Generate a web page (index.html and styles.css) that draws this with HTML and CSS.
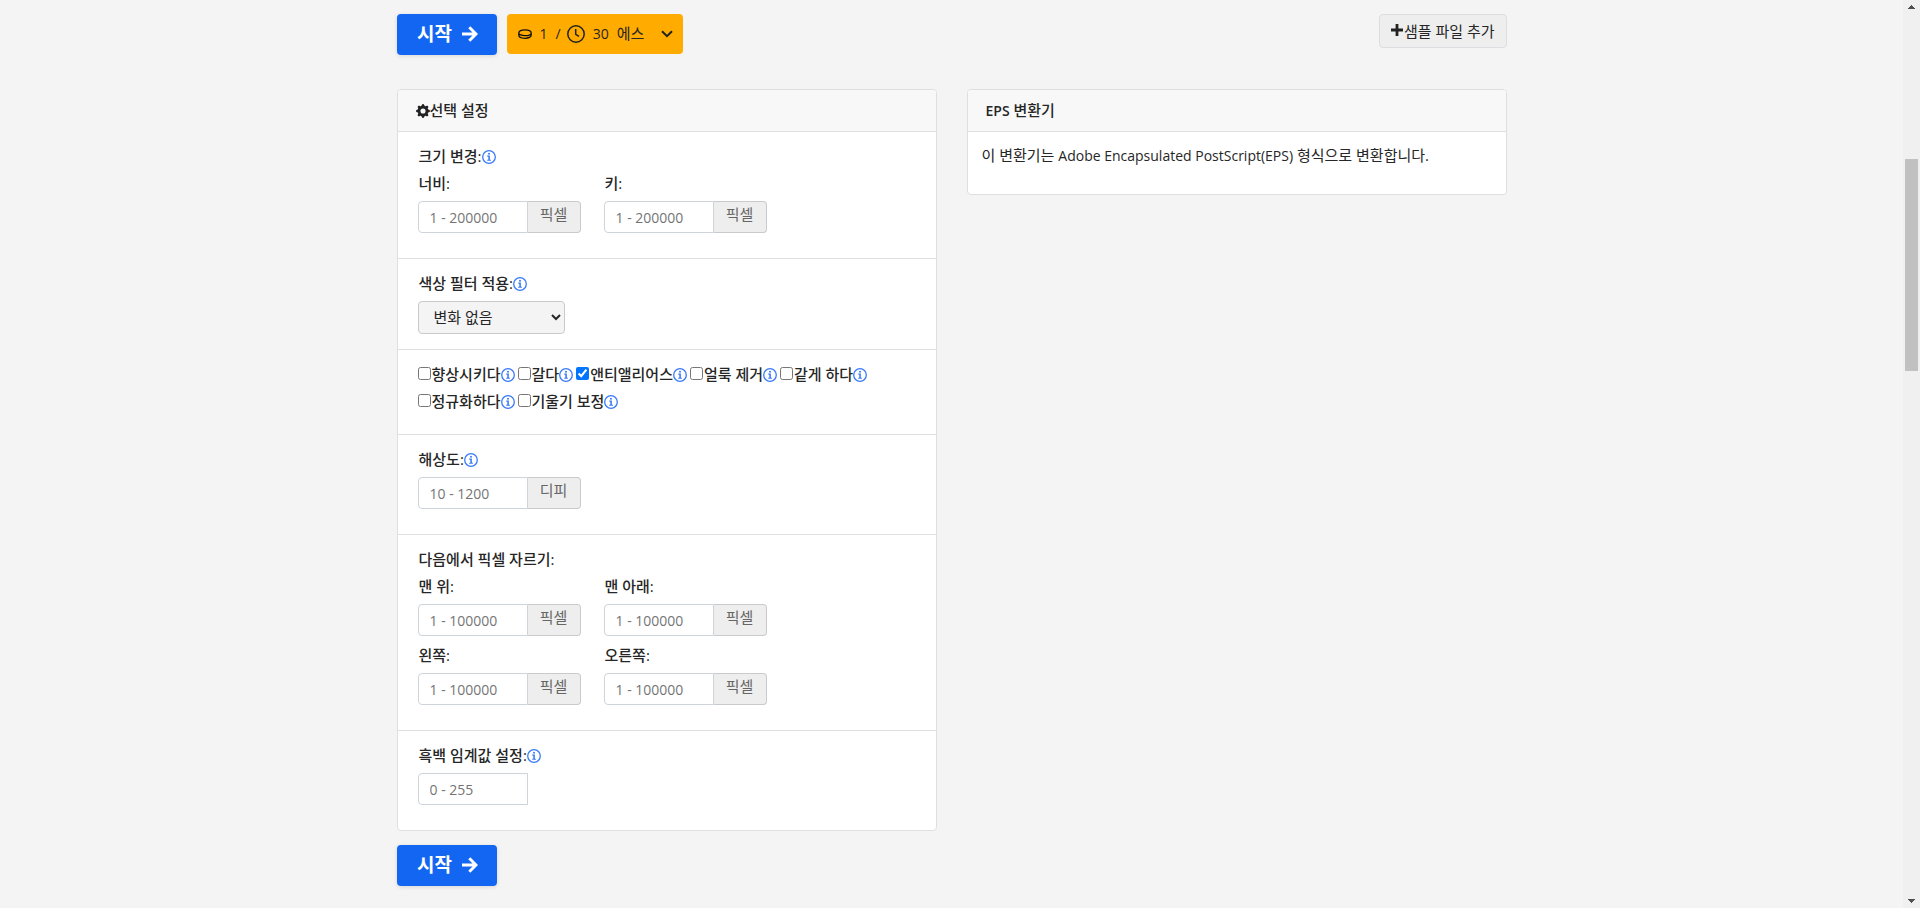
FILE: index.html
```
<!DOCTYPE html>
<html lang="ko">
<head>
<meta charset="utf-8">
<meta name="viewport" content="width=device-width, initial-scale=1">
<title>EPS 변환기</title>
<link rel="stylesheet" href="styles.css">
</head>
<body>
<svg class="sprite" aria-hidden="true">
  <symbol id="info" viewBox="0 0 16 16"><circle cx="8" cy="8" r="7.200" fill="none" stroke="currentColor" stroke-width="1.500"/><path d="M6 6.300h3v4.700h1.200v1.300H5.900V11h1.300V7.600H6z"/><circle cx="8" cy="4.400" r="1.150"/></symbol>
  <symbol id="arrow" viewBox="0 0 17 16"><path d="M1 8h14M8.3 1.2 15 8l-6.700 6.800" fill="none" stroke="currentColor" stroke-width="2.900"/></symbol>
</svg>
<main class="page">
  <div class="container">
    <div class="toolbar">
      <button class="start" type="button">시작 <svg><use href="#arrow"/></svg></button>
      <button class="cost" type="button">
        <svg class="coin" viewBox="0 0 14 10"><path d="M.8 3.900C.8 2 3.400.8 7 .8s6.200 1.200 6.200 3.100S10.600 6.600 7 6.600.8 5.800.8 3.900zm0 0v2.200C.8 8 3.400 9.300 7 9.300S13.200 8 13.200 6.100V3.900" fill="none" stroke="#111" stroke-width="1.300"/></svg>
        <span class="num">1</span><span class="num">/</span>
        <svg class="clock" viewBox="0 0 18 18"><circle cx="9" cy="9" r="8.200"/><path d="M8.700 4v5.300l3.300 2"/></svg>
        <span class="num">30</span><span>에스</span>
        <svg class="chevron" viewBox="0 0 12 8"><path d="m1 1.200 5 5 5-5"/></svg>
      </button>
      <button class="sample" type="button"><svg viewBox="0 0 12 12"><path d="M6 0v12M0 6h12"/></svg>샘플 파일 추가</button>
    </div>

    <div class="columns">
      <form class="card">
        <h2 class="card-head"><svg class="gear" viewBox="0 0 16 16"><path d="M9.405 1.050c-.413-1.400-2.397-1.400-2.810 0l-.1.340a1.464 1.464 0 0 1-2.105.872l-.310-.170c-1.283-.698-2.686.705-1.987 1.987l.169.311c.446.820.023 1.841-.872 2.105l-.340.100c-1.400.413-1.400 2.397 0 2.810l.340.100a1.464 1.464 0 0 1 .872 2.105l-.170.310c-.698 1.283.705 2.686 1.987 1.987l.311-.169a1.464 1.464 0 0 1 2.105.872l.100.340c.413 1.400 2.397 1.400 2.810 0l.100-.340a1.464 1.464 0 0 1 2.105-.872l.310.170c1.283.698 2.686-.705 1.987-1.987l-.169-.311a1.464 1.464 0 0 1 .872-2.105l.340-.100c1.400-.413 1.400-2.397 0-2.810l-.340-.100a1.464 1.464 0 0 1-.872-2.105l.170-.310c.698-1.283-.705-2.686-1.987-1.987l-.311.169a1.464 1.464 0 0 1-2.105-.872l-.100-.340zM8 10.930a2.929 2.929 0 1 1 0-5.860 2.929 2.929 0 0 1 0 5.860z"/></svg>선택 설정</h2>

        <section class="group">
          <div class="title">크기 변경:<svg class="info"><use href="#info"/></svg></div>
          <div class="fields">
            <div><label for="width">너비:</label><div class="unit"><input id="width" type="text" placeholder="1 - 200000"><span>픽셀</span></div></div>
            <div><label for="height">키:</label><div class="unit"><input id="height" type="text" placeholder="1 - 200000"><span>픽셀</span></div></div>
          </div>
        </section>

        <section class="group group-filter">
          <label for="filter">색상 필터 적용:<svg class="info"><use href="#info"/></svg></label>
          <select id="filter"><option>변화 없음</option></select>
        </section>

        <section class="group group-checks">
          <label><input type="checkbox">향상시키다<svg class="info"><use href="#info"/></svg></label>
          <label><input type="checkbox">갈다<svg class="info"><use href="#info"/></svg></label>
          <label><input type="checkbox" checked>앤티앨리어스<svg class="info"><use href="#info"/></svg></label>
          <label><input type="checkbox">얼룩 제거<svg class="info"><use href="#info"/></svg></label>
          <label><input type="checkbox">같게 하다<svg class="info"><use href="#info"/></svg></label>
          <label><input type="checkbox">정규화하다<svg class="info"><use href="#info"/></svg></label>
          <label><input type="checkbox">기울기 보정<svg class="info"><use href="#info"/></svg></label>
        </section>

        <section class="group">
          <label for="dpi">해상도:<svg class="info"><use href="#info"/></svg></label>
          <div class="unit"><input id="dpi" type="text" placeholder="10 - 1200"><span>디피</span></div>
        </section>

        <section class="group">
          <div class="title">다음에서 픽셀 자르기:</div>
          <div class="fields">
            <div><label for="top">맨 위:</label><div class="unit"><input id="top" type="text" placeholder="1 - 100000"><span>픽셀</span></div></div>
            <div><label for="bottom">맨 아래:</label><div class="unit"><input id="bottom" type="text" placeholder="1 - 100000"><span>픽셀</span></div></div>
            <div><label for="left">왼쪽:</label><div class="unit"><input id="left" type="text" placeholder="1 - 100000"><span>픽셀</span></div></div>
            <div><label for="right">오른쪽:</label><div class="unit"><input id="right" type="text" placeholder="1 - 100000"><span>픽셀</span></div></div>
          </div>
        </section>

        <section class="group">
          <label for="threshold">흑백 임계값 설정:<svg class="info"><use href="#info"/></svg></label>
          <div class="unit"><input id="threshold" type="text" placeholder="0 - 255"></div>
        </section>
      </form>

      <article class="card">
        <h2 class="card-head"><span class="latin">EPS</span>&nbsp;변환기</h2>
        <p class="about">이 변환기는 <span class="latin">Adobe Encapsulated PostScript(EPS)</span> 형식으로 변환합니다.</p>
      </article>
    </div>

    <button class="start" type="button">시작 <svg><use href="#arrow"/></svg></button>
  </div>
</main>
<div class="scrollbar" aria-hidden="true">
  <svg viewBox="0 0 7 4"><path d="M3 0h1v1h1v1h1v1h1v1H0V3h1V2h1V1h1z"/></svg>
  <div class="track"><div class="thumb"></div></div>
  <svg viewBox="0 0 7 4"><path d="M0 0h7v1H6v1H5v1H4v1H3V3H2V2H1V1H0z"/></svg>
</div>
</body>
</html>
```
FILE: styles.css
```
* { box-sizing: border-box; }

body {
  margin: 0;
  display: flex;
  min-height: 100vh;
  background: #f4f4f4;
  color: #262626;
  font: 15px/27px "Open Sans", "Noto Sans CJK KR", sans-serif;
}

button, input, select { font: inherit; color: inherit; margin: 0; }
button { cursor: pointer; }
.sprite { display: none; }
.latin, .num { font-size: 14px; }

.page { flex: 1; }
.container { max-width: 1140px; margin: 0 auto; padding: 14px 15px 20px; }

.toolbar { display: flex; align-items: flex-start; gap: 10px; margin-bottom: 34px; }

.start {
  display: flex;
  align-items: center;
  justify-content: center;
  gap: 9px;
  width: 100px;
  height: 41px;
  padding: 0 0 1px 2px;
  border: 0;
  border-radius: 4px;
  background: #1266f1;
  color: #fff;
  font-size: 19px;
  font-weight: 700;
  box-shadow: 0 1px 4px rgba(0, 0, 0, .12);
}
.start svg { width: 17px; height: 16px; }

.cost {
  display: flex;
  align-items: center;
  gap: 8px;
  height: 40px;
  padding: 0 10px 1px 11px;
  border: 0;
  border-radius: 4px;
  background: #ffab00;
}
.coin { width: 14px; height: 10px; }
.clock { width: 18px; height: 18px; margin-left: -2px; fill: none; stroke: #222; stroke-width: 1.500; }
.chevron { width: 12px; height: 8px; margin-left: 9px; fill: none; stroke: #222; stroke-width: 2; }

.sample {
  display: flex;
  align-items: center;
  height: 34px;
  margin-left: auto;
  padding: 0 11px;
  border: 1px solid #dcdde0;
  border-radius: 4px;
  background: #eee;
}
.sample svg { width: 12px; height: 12px; margin: 0 1px 3px 0; stroke: #222; stroke-width: 2.800; }

.columns { display: grid; grid-template-columns: 1fr 1fr; gap: 30px; align-items: start; margin-bottom: 14px; }

.card { border: 1px solid #dfdfdf; border-radius: 4px; background: #fff; }
.card-head {
  display: flex;
  align-items: center;
  height: 42px;
  margin: 0;
  padding: 0 18px;
  border-bottom: 1px solid #dfdfdf;
  border-radius: 3px 3px 0 0;
  background: #f8f8f8;
  font-size: 15px;
  font-weight: 500;
}
.card-head .latin { font-weight: 600; }
.gear { width: 14px; height: 14px; fill: #222; }
.about { margin: 0; padding: 10px 14px 25px; }

.group { padding: 11px 20px 25px; border-bottom: 1px solid #dee0e4; }
.group:last-child { border-bottom: 0; }
.group label, .title { display: flex; align-items: center; padding-left: 1px; font-weight: 500; }
.group-filter { padding-bottom: 15px; }
.group-checks { display: flex; flex-wrap: wrap; column-gap: 3px; padding-bottom: 19px; }
.group-checks label { padding-left: 0; }
.group-checks input { width: 13px; height: 13px; margin: 0 1px 2px 0; }
.info { width: 14px; height: 14px; color: #3b7bf6; fill: currentColor; }

.fields { display: grid; grid-template-columns: max-content max-content; gap: 6px 23px; }

.unit { display: flex; margin-top: 4px; height: 32px; }
.unit input {
  width: 110px;
  padding: 0 10px 0 11px;
  border: 1px solid #ced4da;
  border-radius: 4px 0 0 4px;
  background: #fff;
  font-size: 14px;
}
.unit input::placeholder { color: #757575; opacity: 1; }
.unit span {
  width: 53px;
  border: 1px solid #c8cacc;
  border-left: 0;
  border-radius: 0 4px 4px 0;
  background: #eee;
  color: #666;
  line-height: 25px;
  text-align: center;
}

select {
  display: block;
  width: 147px;
  height: 33px;
  margin-top: 4px;
  padding: 0 0 1px 11px;
  border: 1px solid #c8cacc;
  border-radius: 4px;
  background: #f4f4f4;
}
.group select { margin-top: 4px; }

.scrollbar {
  display: flex;
  flex-direction: column;
  align-items: center;
  width: 17px;
  padding: 5px 0;
  background: #f0f0f0;
}
.scrollbar svg { width: 7px; height: 4px; fill: #505050; }
.track { flex: 1; padding-top: 150px; }
.thumb { width: 13px; height: 212px; background: #c1c1c1; }
```
